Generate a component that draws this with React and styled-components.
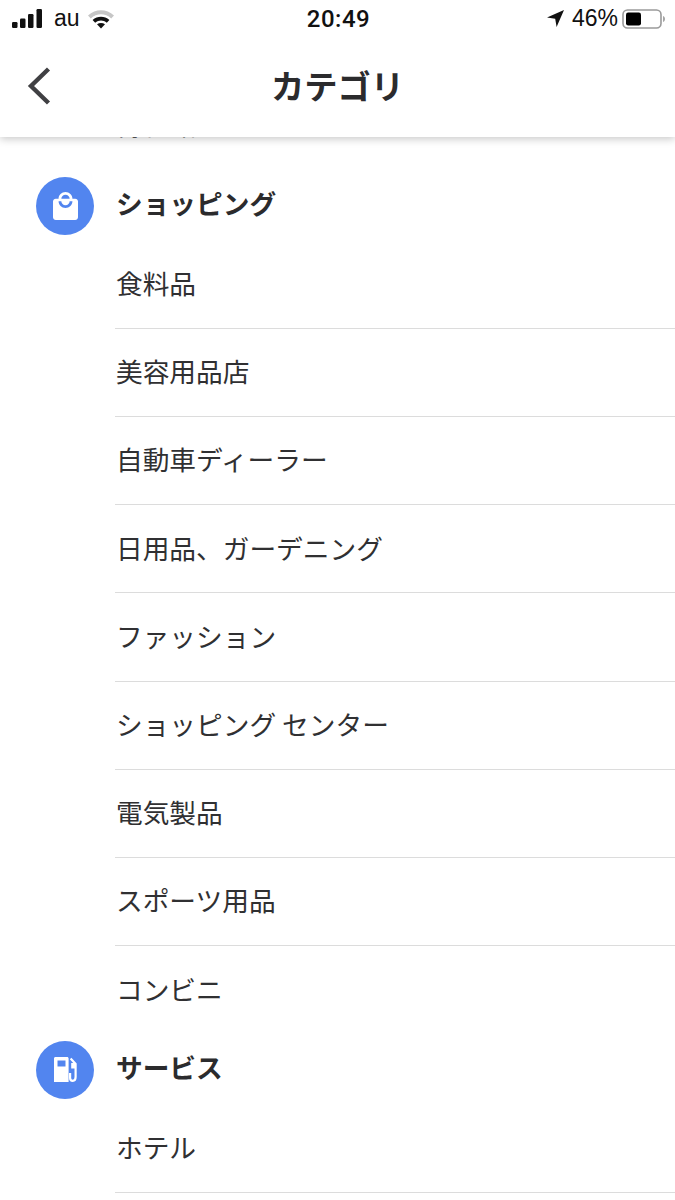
import React from "react";
import styled, { createGlobalStyle } from "styled-components";

const FONT = `"Noto Sans CJK JP", "Liberation Sans", sans-serif`;

const GlobalStyle = createGlobalStyle`
  html, body {
    margin: 0;
    padding: 0;
    background: #fff;
  }
  * {
    box-sizing: border-box;
  }
`;

const Page = styled.div`
  width: 675px;
  height: 1200px;
  overflow: hidden;
  display: flex;
  flex-direction: column;
  font-family: ${FONT};
  color: #303032;
`;

const Header = styled.header`
  position: relative;
  z-index: 2;
  flex: none;
  height: 137px;
  background: #fff;
  box-shadow: 0 2px 8px rgba(0, 0, 0, 0.22);
`;

const StatusBar = styled.div`
  height: 37px;
  display: flex;
  align-items: center;
  justify-content: space-between;
  padding: 0 10px 0 12px;
  color: #111;
  font-family: "Liberation Sans", sans-serif;
  font-size: 23px;
`;

const StatusSide = styled.div`
  display: flex;
  align-items: center;
  gap: ${props => props.gap || 0}px;
  width: 200px;
  justify-content: ${props => (props.right ? "flex-end" : "flex-start")};
`;

const Carrier = styled.span`
  margin-right: -4px;
`;

const Percent = styled.span`
  margin-left: 4px;
`;

const Clock = styled.span`
  font-weight: 500;
  font-family: Roboto, sans-serif;
  font-size: 24px;
  letter-spacing: 0.5px;
`;

const TitleBar = styled.div`
  position: relative;
  height: 100px;
  display: flex;
  align-items: center;
  justify-content: center;
  padding-bottom: 4px;
`;

const BackButton = styled.div`
  position: absolute;
  left: 27px;
  top: 30px;
  display: flex;
`;

const Title = styled.h1`
  margin: 0;
  font-size: 33.3px;
  font-weight: 700;
  line-height: 1;
  color: #2b2b2d;
`;

const List = styled.div`
  flex: 1;
  margin-top: -25px;
`;

const SectionRow = styled.div`
  display: flex;
  align-items: center;
  height: 58px;
  padding-left: 36px;
  margin-top: ${props => props.top}px;
`;

const Badge = styled.div`
  width: 58px;
  height: 58px;
  flex: none;
  border-radius: 50%;
  background: #5285ef;
  display: flex;
  align-items: center;
  justify-content: center;
`;

const SectionTitle = styled.h2`
  margin: -5px 0 0 22px;
  font-size: 26.7px;
  font-weight: 700;
  line-height: 1;
  color: #2b2b2d;
`;

const Item = styled.div`
  margin-left: 115px;
  height: ${props => (props.first ? 94 : props.last ? 95 : 88.15)}px;
  padding: ${props => (props.first ? 4 : 0)}px 0 ${props => (props.last ? 9 : props.first ? 0 : 2)}px 1px;
  display: flex;
  align-items: center;
  font-size: 26.7px;
  line-height: 1;
  border-bottom: ${props => (props.last ? "none" : "1px solid #dcdcdc")};
`;

const ClippedItem = styled(Item)`
  height: 24px;
  padding: 0 0 0 1px;
  border-bottom: none;
`;

const SignalIcon = () => (
  <svg width="31" height="19" viewBox="0 0 31 19" fill="#111">
    <rect x="0" y="13" width="5.5" height="6" rx="1.2" />
    <rect x="8" y="9.5" width="5.5" height="9.5" rx="1.2" />
    <rect x="16" y="5" width="5.5" height="14" rx="1.2" />
    <rect x="24.5" y="0" width="5.5" height="19" rx="1.2" />
  </svg>
);

const WifiIcon = () => (
  <svg width="28" height="21" viewBox="0 0 28 21">
    <path d="M1 7.5C8.5 0.5 19.5 0.5 27 7.5L24.2 10.4C18.3 5 9.7 5 3.8 10.4Z" fill="#c6c6c6" />
    <path d="M5.6 12C10.5 7.7 17.5 7.7 22.4 12L19.8 14.7C16.3 11.8 11.7 11.8 8.2 14.7Z" fill="#111" />
    <path d="M10 16.3C12.4 14.6 15.6 14.6 18 16.3L14 20.5Z" fill="#111" />
  </svg>
);

const LocationIcon = () => (
  <svg width="17" height="17" viewBox="0 0 17 17" fill="#111">
    <path d="M17 0L0 7.6L8.2 8.8L9.6 17Z" />
  </svg>
);

const BatteryIcon = () => (
  <svg width="43" height="20" viewBox="0 0 43 20">
    <rect x="1" y="1" width="38" height="18" rx="4.5" fill="#fff" stroke="#9a9a9a" strokeWidth="1.6" />
    <rect x="4" y="3.5" width="15" height="13" rx="2.2" fill="#000" />
    <path d="M41 7C42.5 7.5 43 8.7 43 10C43 11.3 42.5 12.5 41 13Z" fill="#a5a5a5" />
  </svg>
);

const BackIcon = () => (
  <svg width="24" height="38" viewBox="0 0 24 38" fill="none" stroke="#404043" strokeWidth="4.4">
    <path d="M21.5 2L4 19L21.5 36" />
  </svg>
);

const BagIcon = () => (
  <svg width="25" height="28" viewBox="3 1 18 21" preserveAspectRatio="none" fill="#fff">
    <path d="M19 6h-2c0-2.76-2.24-5-5-5S7 3.24 7 6H5c-1.1 0-1.99.9-1.99 2L3 20c0 1.1.9 2 2 2h14c1.1 0 2-.9 2-2V8c0-1.1-.9-2-2-2zm-7-3c1.66 0 3 1.34 3 3H9c0-1.66 1.34-3 3-3zm0 10c-2.76 0-5-2.24-5-5h2c0 1.66 1.34 3 3 3s3-1.34 3-3h2c0 2.76-2.24 5-5 5z" />
  </svg>
);

const FuelIcon = () => (
  <svg width="23" height="25" viewBox="0 0 23 25" fill="#fff">
    <path
      fillRule="evenodd"
      d="M1.5 0H13C14 0 14.6 0.6 14.6 1.6V25H0V1.6C0 0.6 0.6 0 1.5 0ZM3.5 3.5V9.5H11.5V3.5Z"
    />
    <path
      d="M16.6 1.5L21.6 7V20C21.6 22.4 20.4 23.8 18.8 23.8C17.2 23.8 16.1 22.6 16.1 21V16"
      fill="none"
      stroke="#fff"
      strokeWidth="2.2"
    />
    <path d="M17.2 6H21V11.5H17.2Z" />
  </svg>
);

const SHOPPING = [
  "食料品",
  "美容用品店",
  "自動車ディーラー",
  "日用品、ガーデニング",
  "ファッション",
  "ショッピング センター",
  "電気製品",
  "スポーツ用品",
  "コンビニ",
];

export default function App() {
  return (
    <Page>
      <GlobalStyle />
      <Header>
        <StatusBar>
          <StatusSide gap={11}>
            <SignalIcon />
            <Carrier>au</Carrier>
            <WifiIcon />
          </StatusSide>
          <Clock>20:49</Clock>
          <StatusSide right gap={4}>
            <LocationIcon />
            <Percent>46%</Percent>
            <BatteryIcon />
          </StatusSide>
        </StatusBar>
        <TitleBar>
          <BackButton>
            <BackIcon />
          </BackButton>
          <Title>カテゴリ</Title>
        </TitleBar>
      </Header>
      <List>
        <ClippedItem>博物館</ClippedItem>
        <SectionRow top={41}>
          <Badge>
            <BagIcon />
          </Badge>
          <SectionTitle>ショッピング</SectionTitle>
        </SectionRow>
        {SHOPPING.map((label, i) => (
          <Item key={label} first={i === 0} last={i === SHOPPING.length - 1}>
            {label}
          </Item>
        ))}
        <SectionRow top={0}>
          <Badge>
            <FuelIcon />
          </Badge>
          <SectionTitle>サービス</SectionTitle>
        </SectionRow>
        <Item first>ホテル</Item>
      </List>
    </Page>
  );
}
